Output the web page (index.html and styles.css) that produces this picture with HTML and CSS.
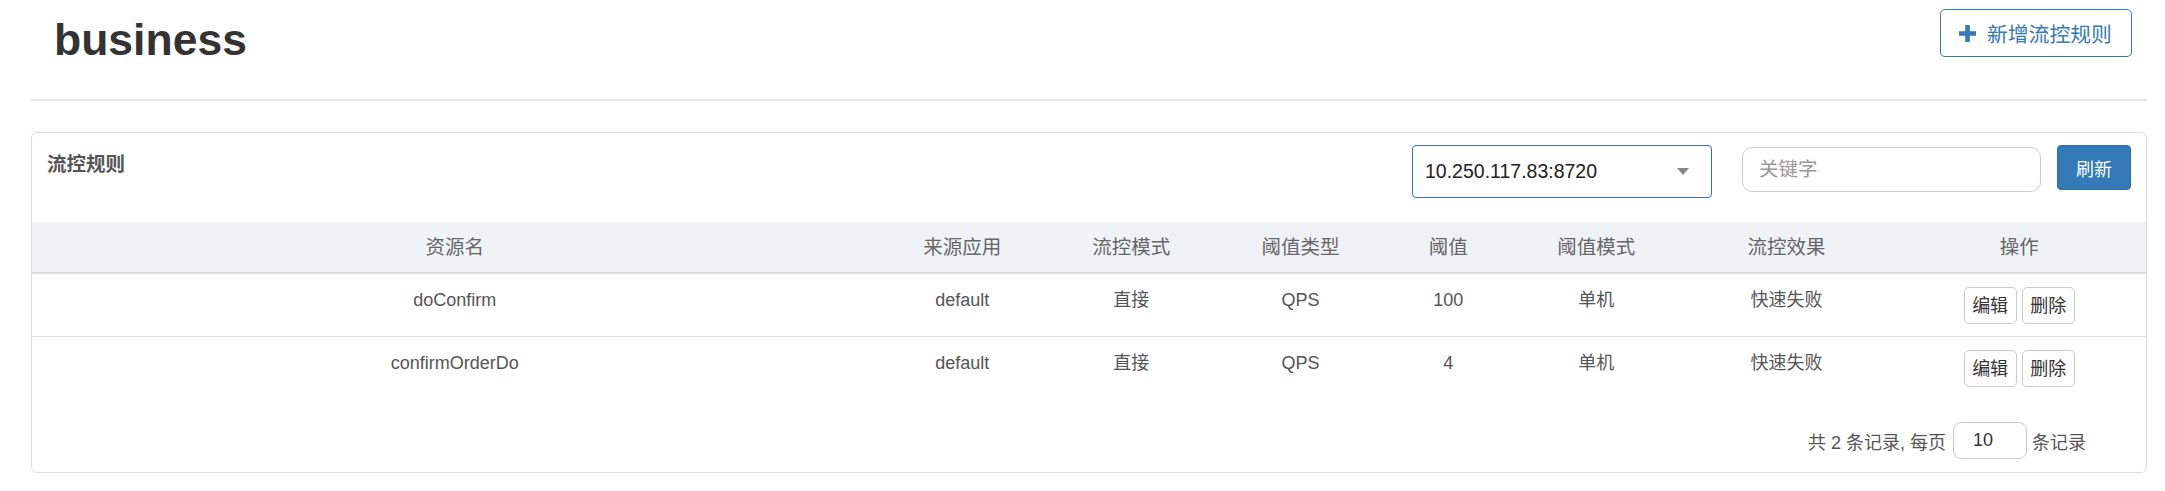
FILE: index.html
```html
<!DOCTYPE html>
<html lang="zh-CN">
<head>
<meta charset="utf-8">
<title>business - 流控规则</title>
<link rel="stylesheet" href="styles.css">
</head>
<body>
<div class="page">
  <div class="top">
    <h1 class="title">business</h1>
    <button class="btn-add" type="button">
      <svg class="plus" width="17" height="17" viewBox="0 0 17 17" aria-hidden="true"><path d="M6.2 0h4.6v6.2H17v4.6h-6.2V17H6.2v-6.2H0V6.2h6.2z" fill="#337ab7"/></svg>
      <span>新增流控规则</span>
    </button>
  </div>
  <div class="divider"></div>
  <div class="panel">
    <div class="panel-head">
      <h3 class="panel-title">流控规则</h3>
      <div class="tools">
        <div class="select"><span>10.250.117.83:8720</span><span class="caret"></span></div>
        <input class="search" type="text" placeholder="关键字">
        <button class="btn-refresh" type="button">刷新</button>
      </div>
    </div>
    <table class="rules">
      <colgroup>
        <col class="c-res"><col class="c-app"><col class="c-mode"><col class="c-type"><col class="c-val"><col class="c-cluster"><col class="c-effect"><col class="c-op">
      </colgroup>
      <thead>
        <tr><th>资源名</th><th>来源应用</th><th>流控模式</th><th>阈值类型</th><th>阈值</th><th>阈值模式</th><th>流控效果</th><th>操作</th></tr>
      </thead>
      <tbody>
        <tr><td>doConfirm</td><td>default</td><td>直接</td><td>QPS</td><td>100</td><td>单机</td><td>快速失败</td><td><button class="btn-sm" type="button">编辑</button> <button class="btn-sm" type="button">删除</button></td></tr>
        <tr><td>confirmOrderDo</td><td>default</td><td>直接</td><td>QPS</td><td>4</td><td>单机</td><td>快速失败</td><td><button class="btn-sm" type="button">编辑</button> <button class="btn-sm" type="button">删除</button></td></tr>
      </tbody>
    </table>
    <div class="pager">
      <span>共 2 条记录, 每页</span>
      <input class="page-size" type="text" value="10">
      <span>条记录</span>
    </div>
  </div>
</div>
</body>
</html>
```

FILE: styles.css
```css
html, body {
  margin: 0;
  padding: 0;
  background: #fff;
}
body {
  font-family: "Liberation Sans", Arial, "Noto Sans CJK SC", sans-serif;
  color: #333;
}
.page {
  padding: 0 18px 0 31px;
}
.top {
  display: flex;
  justify-content: space-between;
  align-items: flex-start;
  height: 99px;
}
.title {
  margin: 16px 0 0 23px;
  font-size: 44.5px;
  line-height: 48px;
  font-weight: bold;
  color: #333;
}
.btn-add {
  margin: 9px 15px 0 0;
  height: 48px;
  width: 192px;
  box-sizing: border-box;
  display: flex;
  align-items: center;
  padding: 0 0 0 18px;
  background: #fff;
  border: 1px solid #337ab7;
  border-radius: 5px;
  color: #337ab7;
  font-family: "Liberation Sans", "Noto Sans CJK SC", sans-serif;
  font-size: 20.8px;
}
.btn-add .plus {
  margin-right: 11px;
  flex: none;
}
.divider {
  height: 2px;
  background: #e5e5e5;
}
.panel {
  margin-top: 31px;
  border: 1px solid #dddddd;
  border-radius: 6px;
  overflow: hidden;
}
.panel-head {
  height: 89px;
  box-sizing: border-box;
  display: flex;
  justify-content: space-between;
  align-items: flex-start;
  padding: 12px 15px 0 15px;
}
.panel-title {
  margin: 5px 0 0 0;
  font-size: 19.5px;
  line-height: 28px;
  font-weight: bold;
  color: #555;
}
.tools {
  display: flex;
  align-items: flex-start;
}
.select {
  width: 300px;
  height: 53px;
  box-sizing: border-box;
  border: 1px solid #3a71a8;
  border-radius: 4px;
  display: flex;
  align-items: center;
  justify-content: space-between;
  padding: 0 22px 0 12px;
  font-size: 19.5px;
  color: #222;
}
.caret {
  width: 0;
  height: 0;
  border-left: 6.5px solid transparent;
  border-right: 6.5px solid transparent;
  border-top: 7px solid #888;
}
.search {
  margin: 2px 0 0 30px;
  width: 299px;
  height: 45px;
  box-sizing: border-box;
  border: 1px solid #cccccc;
  border-radius: 10px;
  padding: 0 16px;
  font-family: "Liberation Sans", "Noto Sans CJK SC", sans-serif;
  font-size: 19.5px;
  color: #555;
  outline: none;
}
.search::placeholder {
  color: #999;
}
.btn-refresh {
  margin-left: 16px;
  width: 74px;
  height: 45px;
  box-sizing: border-box;
  background: #337ab7;
  border: 1px solid #2e6da4;
  border-radius: 4px;
  color: #fff;
  font-family: "Liberation Sans", "Noto Sans CJK SC", sans-serif;
  font-size: 18px;
  padding: 0;
}
.rules {
  width: 100%;
  border-collapse: collapse;
  table-layout: fixed;
}
.c-res { width: 40%; }
.c-app { width: 8%; }
.c-mode { width: 8%; }
.c-type { width: 8%; }
.c-val { width: 6%; }
.c-cluster { width: 8%; }
.c-effect { width: 10%; }
.c-op { width: 12%; }
.rules th {
  background: #f0f3f6;
  font-weight: normal;
  font-size: 19.5px;
  line-height: 26px;
  color: #666;
  padding: 12px 8px;
  text-align: center;
  border-bottom: 2px solid #dddddd;
}
.rules td {
  font-size: 18px;
  line-height: 26px;
  color: #555;
  padding: 13px 8px 12px;
  text-align: center;
  vertical-align: top;
  border-top: 1px solid #dddddd;
}
.btn-sm {
  font-family: "Liberation Sans", "Noto Sans CJK SC", sans-serif;
  font-size: 18px;
  line-height: 26px;
  padding: 4.5px 7.5px;
  background: #fff;
  border: 1px solid #cccccc;
  border-radius: 5px;
  color: #333;
}
.pager {
  display: flex;
  justify-content: flex-end;
  align-items: center;
  padding: 23px 60px 13px 0;
  font-size: 18px;
  color: #555;
}
.page-size {
  width: 74px;
  height: 37px;
  box-sizing: border-box;
  margin: 0 5px 0 7px;
  border: 1px solid #cccccc;
  border-radius: 8px;
  padding: 0 0 0 19px;
  font-family: "Liberation Sans", sans-serif;
  font-size: 18px;
  color: #333;
}
```
